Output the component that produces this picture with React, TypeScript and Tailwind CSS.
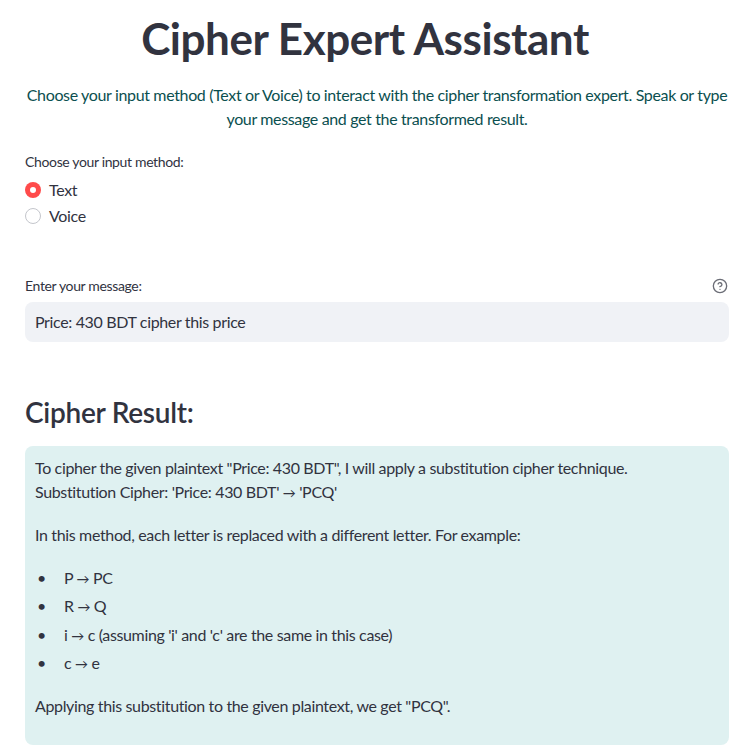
import React from "react";

const font = { fontFamily: '"Source Sans Pro", Lato, "Noto Sans", sans-serif' };

export default function App() {
  return (
    <div className="h-[745px] w-full overflow-hidden bg-white text-[#31333f] tracking-[-0.022em]" style={font}>
      <div className="pl-[25px] pr-[15px]">
        <h1 className="pr-[24px] pt-[11px] text-center text-[44px] font-bold leading-[54px] tracking-[-0.01em] text-[#31333f]">
          Cipher Expert Assistant
        </h1>
        <p className="mt-[18px] text-center text-[16px] leading-[24px] text-[#0b4f4f]">
          Choose your input method (Text or Voice) to interact with the cipher transformation expert. Speak or type your message and get the transformed result.
        </p>

        <div className="mt-[21px] text-[14px] leading-[20px]">Choose your input method:</div>
        <div className="mt-[6px] flex flex-col gap-[2px]">
          <label className="flex h-[24px] items-center gap-[8px] text-[16px]">
            <span className="flex h-[16px] w-[16px] items-center justify-center rounded-full bg-[#ff4b4b]">
              <span className="h-[6px] w-[6px] rounded-full bg-white" />
            </span>
            Text
          </label>
          <label className="flex h-[24px] items-center gap-[8px] text-[16px]">
            <span className="h-[16px] w-[16px] rounded-full border border-[#c4c6cc] bg-white" />
            Voice
          </label>
        </div>

        <div className="mt-[48px] flex items-center justify-between text-[14px] leading-[20px]">
          <span>Enter your message:</span>
          <svg width="16" height="16" viewBox="0 0 24 24" fill="none" stroke="#6b6d76" strokeWidth="2" strokeLinecap="round" strokeLinejoin="round" className="mr-[1px]">
            <circle cx="12" cy="12" r="10" />
            <path d="M9.1 9a3 3 0 0 1 5.8 1c0 2-3 3-3 3" />
            <path d="M12 17h.01" />
          </svg>
        </div>
        <div className="mt-[6px] flex h-[40px] items-center rounded-[8px] bg-[#f0f2f6] px-[10px] text-[16px]">
          Price: 430 BDT cipher this price
        </div>

        <h3 className="mt-[52px] text-[28px] font-semibold leading-[36px] tracking-[-0.01em] text-[#31333f]">Cipher Result:</h3>

        <div className="mt-[16px] rounded-[8px] bg-[#dff1f1] px-[10px] pb-[27px] pt-[10px] text-[16px] leading-[24px] text-[#31333f]">
          <p>
            To cipher the given plaintext "Price: 430 BDT", I will apply a substitution cipher technique.
            <br />
            Substitution Cipher: 'Price: 430 BDT' <span className="text-[13px] leading-none">→</span> 'PCQ'
          </p>
          <p className="mt-[19px]">In this method, each letter is replaced with a different letter. For example:</p>
          <ul className="mt-[19px] flex flex-col gap-[4.3px]">
            {[
              ["P", "PC"],
              ["R", "Q"],
              ["i", "c (assuming 'i' and 'c' are the same in this case)"],
              ["c", "e"],
            ].map(([a, b]) => (
              <li key={a + b} className="flex h-[24px] items-center">
                <span className="w-[29px] pl-[2px]">•</span>
                <span>
                  {a} <span className="text-[13px] leading-none">→</span> {b}
                </span>
              </li>
            ))}
          </ul>
          <p className="mt-[19px]">Applying this substitution to the given plaintext, we get "PCQ".</p>
        </div>
      </div>
    </div>
  );
}
